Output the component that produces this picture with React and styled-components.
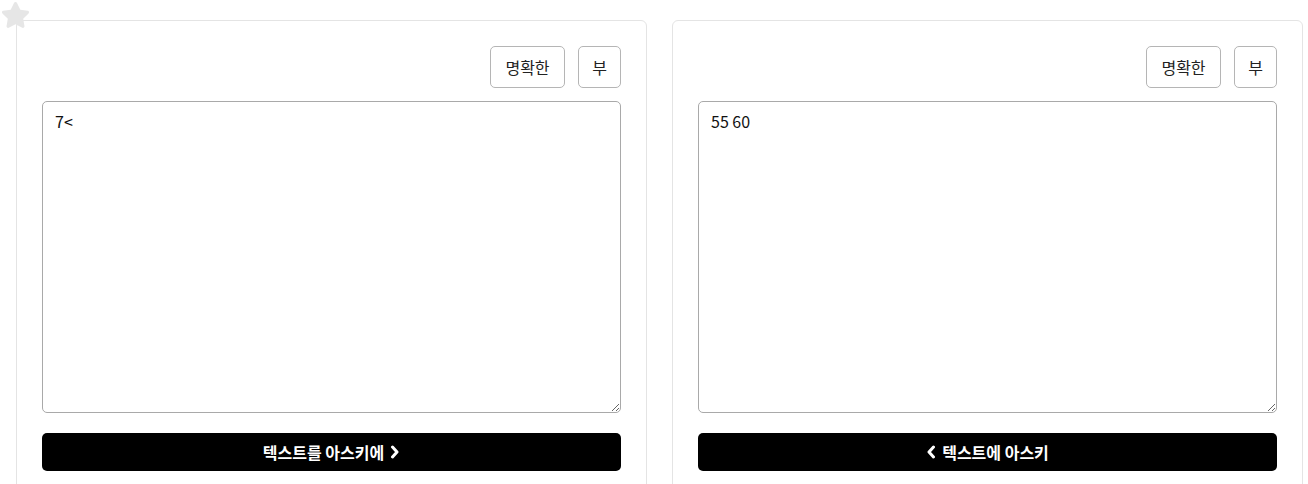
import styled, { createGlobalStyle } from 'styled-components'

const GlobalStyle = createGlobalStyle`
  html, body {
    margin: 0;
    padding: 0;
    background: #fff;
    font-family: "Noto Sans CJK KR", "Noto Sans", sans-serif;
    color: #111;
  }
`

const Page = styled.div`
  position: relative;
  display: grid;
  grid-template-columns: 631px 631px;
  column-gap: 25px;
  padding: 20px 0 0 16px;
  height: 484px;
  box-sizing: border-box;
  overflow: hidden;
`

const Star = styled.svg`
  position: absolute;
  left: -1px;
  top: -1px;
  width: 33px;
  height: 33px;
`

const Card = styled.section`
  border: 1px solid #e4e4e4;
  border-radius: 6px;
  padding: 25px 25px 40px;
  background: #fff;
  display: flex;
  flex-direction: column;
`

const Toolbar = styled.div`
  display: flex;
  justify-content: flex-end;
  gap: 13px;
  margin-bottom: 13px;
`

const ToolButton = styled.button`
  height: 42px;
  padding: 0 ${(p) => (p.$narrow ? '13px' : '12px')};
  min-width: ${(p) => (p.$narrow ? '43px' : '75px')};
  border: 1px solid #b5b5b5;
  border-radius: 5px;
  background: #fff;
  font-family: inherit;
  font-size: 16px;
  color: #222;
  cursor: pointer;
`

const TextBox = styled.textarea`
  display: block;
  width: 100%;
  height: 312px;
  box-sizing: border-box;
  border: 1px solid #a9a9a9;
  border-radius: 5px;
  padding: 8px 12px;
  font-family: inherit;
  font-size: 16px;
  line-height: 1.4;
  color: #111;
  resize: both;
  outline: none;
`

const Convert = styled.button`
  margin-top: 20px;
  height: 38px;
  width: 100%;
  border: none;
  border-radius: 5px;
  background: #000;
  color: #fff;
  font-family: inherit;
  font-weight: 700;
  font-size: 16px;
  display: flex;
  align-items: center;
  justify-content: center;
  gap: 6px;
  cursor: pointer;
`

const Chevron = ({ dir }) => (
  <svg width="10" height="14" viewBox="0 0 10 14">
    <path
      d={dir === 'left' ? 'M7.5 2 3 7l4.5 5' : 'M2.5 2 7 7l-4.5 5'}
      fill="none"
      stroke="#fff"
      strokeWidth="3"
      strokeLinecap="round"
      strokeLinejoin="round"
    />
  </svg>
)

const Panel = ({ value, children }) => (
  <Card>
    <Toolbar>
      <ToolButton>명확한</ToolButton>
      <ToolButton $narrow>부</ToolButton>
    </Toolbar>
    <TextBox defaultValue={value} spellCheck={false} />
    {children}
  </Card>
)

export default function App() {
  return (
    <>
      <GlobalStyle />
      <Page>
        <Panel value="7<">
          <Convert>
            텍스트를 아스키에 <Chevron dir="right" />
          </Convert>
        </Panel>
        <Panel value="55 60">
          <Convert>
            <Chevron dir="left" /> 텍스트에 아스키
          </Convert>
        </Panel>
        <Star viewBox="0 0 24 24">
          <path
            d="M12 2.2c.5 0 .9.3 1.1.7l2.4 4.9 5.4.8c.9.1 1.3 1.2.6 1.9l-3.9 3.8.9 5.4c.2.9-.8 1.6-1.6 1.2L12 18.3l-4.9 2.6c-.8.4-1.8-.3-1.6-1.2l.9-5.4-3.9-3.8c-.7-.7-.3-1.8.6-1.9l5.4-.8 2.4-4.9c.2-.4.6-.7 1.1-.7z"
            fill="#e6e6e6"
          />
        </Star>
      </Page>
    </>
  )
}
